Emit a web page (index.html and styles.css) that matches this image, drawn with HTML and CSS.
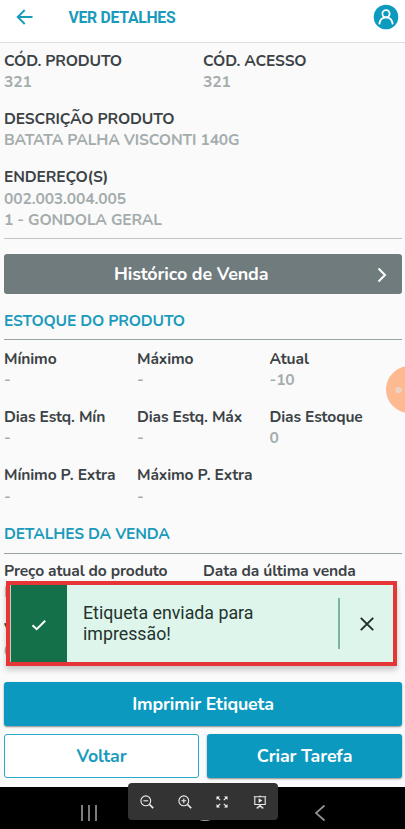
FILE: index.html
```html
<!DOCTYPE html>
<html lang="pt-BR">
<head>
<meta charset="utf-8">
<meta name="viewport" content="width=device-width">
<title>Ver Detalhes</title>
<link rel="stylesheet" href="styles.css">
</head>
<body>
<div class="app">
  <header class="topbar">
    <svg class="back" viewBox="0 0 18 18"><path d="M16.500 9H2M8.700 2 1.700 9l7 7"/></svg>
    <h1>VER DETALHES</h1>
    <svg class="avatar" viewBox="0 0 26 26"><circle class="disc" cx="13" cy="13" r="12.300"/><circle cx="13" cy="9.800" r="3.600"/><path d="M6.300 20.400c.4-4.400 3-7 6.700-7s6.300 2.600 6.700 7"/></svg>
  </header>

  <main>
    <div class="row two">
      <div><b>CÓD. PRODUTO</b><span>321</span></div>
      <div><b>CÓD. ACESSO</b><span>321</span></div>
    </div>
    <div class="row"><div><b>DESCRIÇÃO PRODUTO</b><span>BATATA PALHA VISCONTI 140G</span></div></div>
    <div class="row"><div><b>ENDEREÇO(S)</b><span>002.003.004.005</span><span>1 - GONDOLA GERAL</span></div></div>
    <div class="rule"></div>
    <button class="history"><span>Histórico de Venda</span><svg viewBox="0 0 10 16"><path d="m1.500 1.500 6.500 6.500-6.500 6.500"/></svg></button>

    <h2>ESTOQUE DO PRODUTO</h2>
    <div class="row three">
      <div><b>Mínimo</b><span>-</span></div>
      <div><b>Máximo</b><span>-</span></div>
      <div><b>Atual</b><span>-10</span></div>
    </div>
    <div class="row three">
      <div><b>Dias Estq. Mín</b><span>-</span></div>
      <div><b>Dias Estq. Máx</b><span>-</span></div>
      <div><b>Dias Estoque</b><span>0</span></div>
    </div>
    <div class="row three">
      <div><b>Mínimo P. Extra</b><span>-</span></div>
      <div><b>Máximo P. Extra</b><span>-</span></div>
    </div>

    <h2 class="sale">DETALHES DA VENDA</h2>
    <div class="row two">
      <div><b>Preço atual do produto</b><span>R</span></div>
      <div><b>Data da última venda</b></div>
    </div>
    <div class="row"><div><b>V</b><span>0</span></div></div>
  </main>

  <footer class="actions">
    <button class="solid wide">Imprimir Etiqueta</button>
    <button class="outline">Voltar</button>
    <button class="solid">Criar Tarefa</button>
  </footer>

  <nav class="system">
    <svg class="recents" viewBox="0 0 18 18"><path d="M2 1v16M9 1v16M16 1v16"/></svg>
    <i class="home"></i>
    <svg class="prev" viewBox="0 0 12 18"><path d="M10.500 1.500 2 9l8.500 7.500"/></svg>
  </nav>

  <div class="bubble"></div>

  <div class="toast">
    <div class="status"><svg viewBox="0 0 16 12"><path d="m1.500 6.200 4.200 4 8.500-8.500"/></svg></div>
    <p>Etiqueta enviada para<br>impressão!</p>
    <div class="close"><svg viewBox="0 0 14 14"><path d="m.8.8 12.400 12.400M13.200.8.8 13.200"/></svg></div>
  </div>

  <div class="viewer">
    <svg viewBox="0 0 14 14"><circle cx="5.800" cy="5.800" r="4.900"/><path d="M3.400 5.800h4.800"/><path class="thick" d="m9.500 9.500 3.700 3.700"/></svg>
    <svg viewBox="0 0 14 14"><circle cx="5.800" cy="5.800" r="4.900"/><path d="M3.400 5.800h4.800M5.800 3.400v4.800"/><path class="thick" d="m9.500 9.500 3.700 3.700"/></svg>
    <svg viewBox="0 0 14 14"><path d="M5.200 5.200 2 2M8.800 5.200 12 2M5.200 8.800 2 12M8.800 8.800 12 12"/><path class="fill" d="M1.500 1.500h3.500l-3.500 3.500zM12.500 1.500v3.500l-3.500-3.500zM1.500 12.500v-3.500l3.500 3.500zM12.500 12.500h-3.500l3.500-3.500z"/></svg>
    <svg viewBox="0 0 14 14"><path d="M.8 1.700h12.400M1.800 1.700v7.800h10.400v-7.800M7 .5v1M7 9.500v3M4 13l3-2.500 3 2.500M3.500 13h2M8.500 13h2"/><path class="fill" d="m5.600 3.300 3.700 2.300-3.700 2.300z"/></svg>
  </div>
</div>
</body>
</html>
```
FILE: styles.css
```css
* { box-sizing: border-box; }
body { margin: 0; background: #fafafa; }
svg { display: block; fill: none; flex: none; }
button { font: inherit; letter-spacing: inherit; padding: 0; margin: 0; border: 0; }
.app {
  position: relative;
  width: 405px;
  height: 829px;
  overflow: hidden;
  display: flex;
  flex-direction: column;
  font: 700 15.600px/21.200px Nunito, Lato, sans-serif;
  letter-spacing: -0.130px;
  color: #3c4346;
}
.topbar {
  height: 42.500px;
  flex: none;
  display: flex;
  align-items: flex-start;
  padding-left: 16px;
  background: #fff;
  border-bottom: 1.500px solid #dedede;
}
.back { width: 18px; height: 18px; margin-top: 8px; stroke: #1a9bbc; stroke-width: 1.900; }
.topbar h1 { margin: 6.500px 0 0 34.500px; font: 700 15.800px/22px Roboto, sans-serif; letter-spacing: -0.300px; color: #1a9bbc; white-space: nowrap; }
.avatar { width: 26px; height: 26px; margin: 4px 6px 0 auto; stroke: #fff; stroke-width: 1.800; }
.avatar .disc { fill: #0c9abf; stroke: none; }

main { flex: 1; min-height: 0; overflow: hidden; padding: 8px 3px 0 4px; }
.row { display: grid; margin-bottom: 16px; white-space: nowrap; }
.two { grid-template-columns: 199px 1fr; }
.three { grid-template-columns: 133px 132.500px 1fr; }
.row b, .row span { display: block; font-weight: 700; }
.row span { color: #a4acac; }
.rule { height: 1px; background: #c2c4c4; margin-top: -9px; }
.history {
  display: flex;
  align-items: center;
  width: 398px;
  height: 40px;
  margin-top: 15px;
  padding: 1px 15px 0 110px;
  justify-content: space-between;
  border-radius: 3px;
  background: #707b7e;
  color: #fff;
  font-size: 17.900px;
}
.history svg { width: 10px; height: 16px; stroke: #fff; stroke-width: 2; margin-top: 2px; }
h2 {
  margin: 17px 0 9px;
  padding-bottom: 6.500px;
  font: inherit;
  color: #1a9bbc;
  border-bottom: 1px solid #9aa3a3;
}
h2.sale { margin: 15.500px 0 7.500px; padding-bottom: 7.500px; }

.actions {
  flex: none;
  height: 105px;
  display: grid;
  grid-template-columns: 195px 195px;
  grid-template-rows: 44px 44px;
  gap: 8px;
  padding: 0 4px;
  font-size: 17.800px;
}
.actions button { padding-top: 2px; }
.actions .wide { grid-column: 1 / 3; }
.solid { background: #0c99bf; color: #fff; border-radius: 3px; box-shadow: 0 1px 2px rgba(0,0,0,.45); }
.outline { background: #fff; color: #1a9bbc; border: 1px solid #2ba9c8; border-radius: 3px; }

.system {
  flex: none;
  height: 42px;
  background: #000;
  display: flex;
  align-items: center;
  padding: 9px 79px 0 80px;
  justify-content: space-between;
}
.system svg { stroke: #929292; stroke-width: 1.700; }
.recents { width: 18px; height: 18px; }
.home { width: 16px; height: 16px; border: 2px solid #929292; border-radius: 6px; margin-left: -2px; }
.prev { width: 12px; height: 18px; }

.bubble {
  position: absolute;
  left: 386px;
  top: 366px;
  width: 47px;
  height: 47px;
  border-radius: 50%;
  background: radial-gradient(circle at 12.500px 24px, #e9d3c4 2.800px, #fdb990 3.600px);
}
.toast {
  position: absolute;
  left: 6px;
  top: 581px;
  width: 391px;
  height: 85px;
  display: flex;
  border: 4px solid #e53537;
  background: #def5eb;
  box-shadow: 0 4px 6px rgba(0,0,0,.2);
  font: 400 17.800px/21.200px Roboto, sans-serif;
  letter-spacing: 0;
  color: #22332d;
}
.status { width: 57px; display: flex; align-items: center; justify-content: center; background: #137048; border-left: 1px solid #b9d5c8; }
.status svg { width: 16px; height: 12px; stroke: #fff; stroke-width: 2; margin-top: 2px; }
.toast p { flex: 1; margin: 17px 0 0 16px; white-space: nowrap; }
.close { width: 55px; height: 51px; margin-top: 13px; border-left: 2px solid #7ab5a0; display: flex; align-items: center; padding-left: 20px; }
.close svg { width: 14px; height: 14px; stroke: #1e2b27; stroke-width: 1.900; }

.viewer {
  position: absolute;
  left: 128px;
  top: 783px;
  width: 150px;
  height: 37px;
  display: flex;
  align-items: center;
  justify-content: space-between;
  padding: 0 11px 0 12px;
  border-radius: 4px;
  background: #333;
}
.viewer svg { width: 14px; height: 14px; stroke: #eee; stroke-width: 1.100; }
.viewer .thick { stroke-width: 1.700; }
.viewer .fill { fill: #eee; stroke: none; }
```
